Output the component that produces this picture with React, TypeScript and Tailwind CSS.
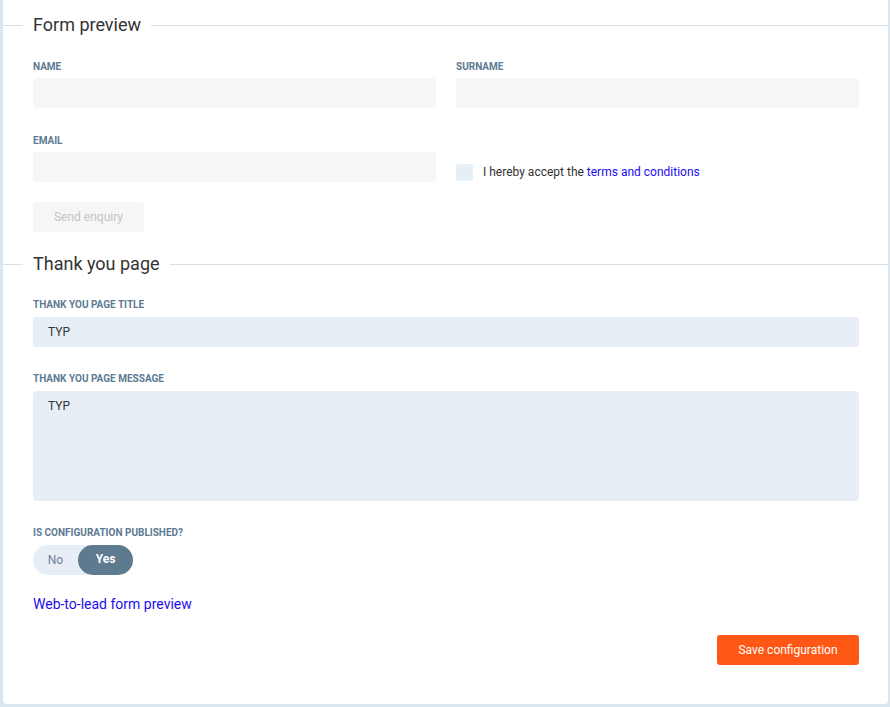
import React from "react";

const font = { fontFamily: "Roboto, 'Liberation Sans', Arial, sans-serif" };

function SectionHeader({ title }: { title: string }) {
  return (
    <div className="flex items-center h-[24px]">
      <div className="w-[20px] h-px bg-[#d6e1ea]" />
      <div className="px-[10px] text-[18px] leading-[24px] text-[#333333]">{title}</div>
      <div className="flex-1 h-px bg-[#d6e1ea]" />
    </div>
  );
}

function Label({ children }: { children: React.ReactNode }) {
  return (
    <div className="text-[10px] leading-[12px] font-bold uppercase text-[#5c7a93] tracking-normal">
      {children}
    </div>
  );
}

export default function App() {
  return (
    <div className="w-full h-[707px] bg-[#dbe5ee] pl-[3px] pr-[2px] overflow-hidden" style={font}>
      <div className="w-[885px] h-[704px] bg-white rounded-b-[4px] pt-[13px]">
        <SectionHeader title="Form preview" />
        <div className="pl-[30px] pr-[29px]">
          <div className="grid grid-cols-2 gap-x-[20px] mt-[24px]">
            <div>
              <Label>Name</Label>
              <div className="mt-[5px] h-[30px] rounded-[4px] bg-[#f6f6f6]" />
            </div>
            <div>
              <Label>Surname</Label>
              <div className="mt-[5px] h-[30px] rounded-[4px] bg-[#f6f6f6]" />
            </div>
          </div>
          <div className="grid grid-cols-2 gap-x-[20px] mt-[27px]">
            <div>
              <Label>Email</Label>
              <div className="mt-[5px] h-[30px] rounded-[4px] bg-[#f6f6f6]" />
            </div>
            <div className="flex items-end">
              <div className="flex items-center gap-[10px] pb-[1px]">
                <div className="w-[17px] h-[17px] rounded-[3px] bg-[#e6eef6]" />
                <div className="text-[12px] leading-[16px] text-[#333333] pb-[1px]">
                  I hereby accept the <span className="text-[#1a0dee]">terms and conditions</span>
                </div>
              </div>
            </div>
          </div>
          <div className="mt-[20px]">
            <div className="w-[111px] h-[30px] rounded-[4px] bg-[#f6f6f6] flex items-center justify-center text-[12px] text-[#c4c4c4]">
              Send enquiry
            </div>
          </div>
        </div>
        <div className="mt-[20px]">
          <SectionHeader title="Thank you page" />
        </div>
        <div className="pl-[30px] pr-[29px]">
          <div className="mt-[23px]">
            <Label>Thank you page title</Label>
            <div className="mt-[6px] h-[30px] rounded-[4px] bg-[#e7eef6] flex items-center px-[15px] text-[12px] text-[#333333]">
              TYP
            </div>
          </div>
          <div className="mt-[26px]">
            <Label>Thank you page message</Label>
            <div className="mt-[6px] h-[110px] rounded-[4px] bg-[#e7eef6] px-[15px] pt-[7px] text-[12px] leading-[16px] text-[#333333]">
              TYP
            </div>
          </div>
          <div className="mt-[26px]">
            <Label>Is configuration published?</Label>
            <div className="mt-[6px] flex w-[100px] h-[30px] rounded-full bg-[#e7eef6]">
              <div className="w-[45px] flex items-center justify-center text-[12px] text-[#6f8294]">No</div>
              <div className="w-[55px] rounded-full bg-[#5e7a8f] flex items-center justify-center text-[12px] font-bold text-white pb-[2px]">
                Yes
              </div>
            </div>
          </div>
          <div className="mt-[19px] text-[14px] leading-[20px] text-[#1a0dee]">Web-to-lead form preview</div>
          <div className="mt-[21px] flex justify-end">
            <div className="w-[142px] h-[30px] rounded-[3px] bg-[#fe5716] flex items-center justify-center text-[12px] text-white">
              Save configuration
            </div>
          </div>
        </div>
      </div>
    </div>
  );
}
